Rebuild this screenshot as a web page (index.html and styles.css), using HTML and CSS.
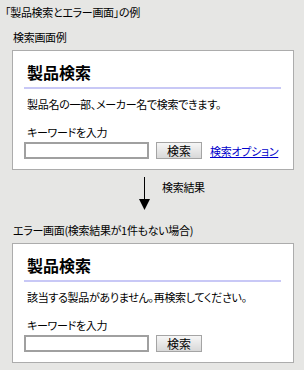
FILE: index.html
```html
<!DOCTYPE html>
<html lang="ja">
<head>
    <meta charset="UTF-8">
    <title>製品検索とエラー画面の例</title>
    <link rel="stylesheet" href="styles.css">
</head>
<body>

<div class="page">
    <p class="caption">「製品検索とエラー画面」の例</p>

    <p class="section-label">検索画面例</p>
    <div class="panel">
        <h2 class="panel-title">製品検索</h2>
        <p class="panel-text">製品名の一部、メーカー名で検索できます。</p>
        <p class="field-label">キーワードを入力</p>
        <div class="search-row">
            <input type="text" class="search-input">
            <button class="search-button">検索</button>
            <a href="#" class="search-option">検索オプション</a>
        </div>
    </div>

    <div class="flow">
        <svg class="flow-arrow" width="11" height="33" viewBox="0 0 11 33">
            <line x1="5.5" y1="0" x2="5.5" y2="24" stroke="#000" stroke-width="1"/>
            <polygon points="0,22 11,22 5.5,33" fill="#000"/>
        </svg>
        <span class="flow-text">検索結果</span>
    </div>

    <p class="section-label section-label-error">エラー画面(検索結果が1件もない場合)</p>
    <div class="panel">
        <h2 class="panel-title">製品検索</h2>
        <p class="panel-text">該当する製品がありません。再検索してください。</p>
        <p class="field-label">キーワードを入力</p>
        <div class="search-row">
            <input type="text" class="search-input">
            <button class="search-button">検索</button>
        </div>
    </div>
</div>

</body>
</html>
```

FILE: styles.css
```css
body {
    margin: 0;
    padding: 0;
    background-color: #e6e6e4;
    color: #000;
    font-family: "Noto Sans CJK JP", "Noto Sans", sans-serif;
    font-size: 11px;
    font-feature-settings: "palt";
    letter-spacing: -0.3px;
}

.page {
    padding: 5px 10px 0 5px;
}

p {
    margin: 0;
    line-height: 14px;
}

.section-label {
    margin-top: 11px;
    padding-left: 8px;
}

.section-label-error {
    margin-top: 13px;
}

.panel {
    margin: 6px 0 0 7px;
    padding: 11px 12px 10px 11px;
    background-color: #fff;
    border: 1px solid #acacac;
}

.panel-title {
    margin: 0;
    padding: 0 3px 5px;
    font-size: 16px;
    line-height: 20px;
    font-weight: bold;
    letter-spacing: 0;
    border-bottom: 2px solid #c8c8f6;
}

.panel-text {
    margin-top: 8px;
    padding-left: 3px;
}

.field-label {
    margin-top: 14px;
    padding-left: 3px;
}

.search-row {
    display: flex;
    align-items: center;
    margin-top: 3px;
}

.search-input {
    box-sizing: border-box;
    width: 125px;
    height: 17px;
    margin: 0;
    padding: 0 2px;
    border: 2px solid #a0a0a0;
    background-color: #fff;
}

.search-button {
    box-sizing: border-box;
    width: 46px;
    height: 17px;
    margin: 0 0 0 7px;
    padding: 0;
    border: 1px solid #a4a4a4;
    background: linear-gradient(#f6f6f6, #d8d8d8);
    font-family: inherit;
    font-size: 12px;
    line-height: 15px;
    letter-spacing: 0;
    color: #000;
}

.search-option {
    margin-left: 8px;
    color: #0000cc;
    text-decoration: underline;
}

.flow {
    display: flex;
    align-items: flex-start;
    margin-top: 7px;
    padding-left: 134px;
}

.flow-text {
    margin: 3px 0 0 12px;
    line-height: 14px;
}
```
